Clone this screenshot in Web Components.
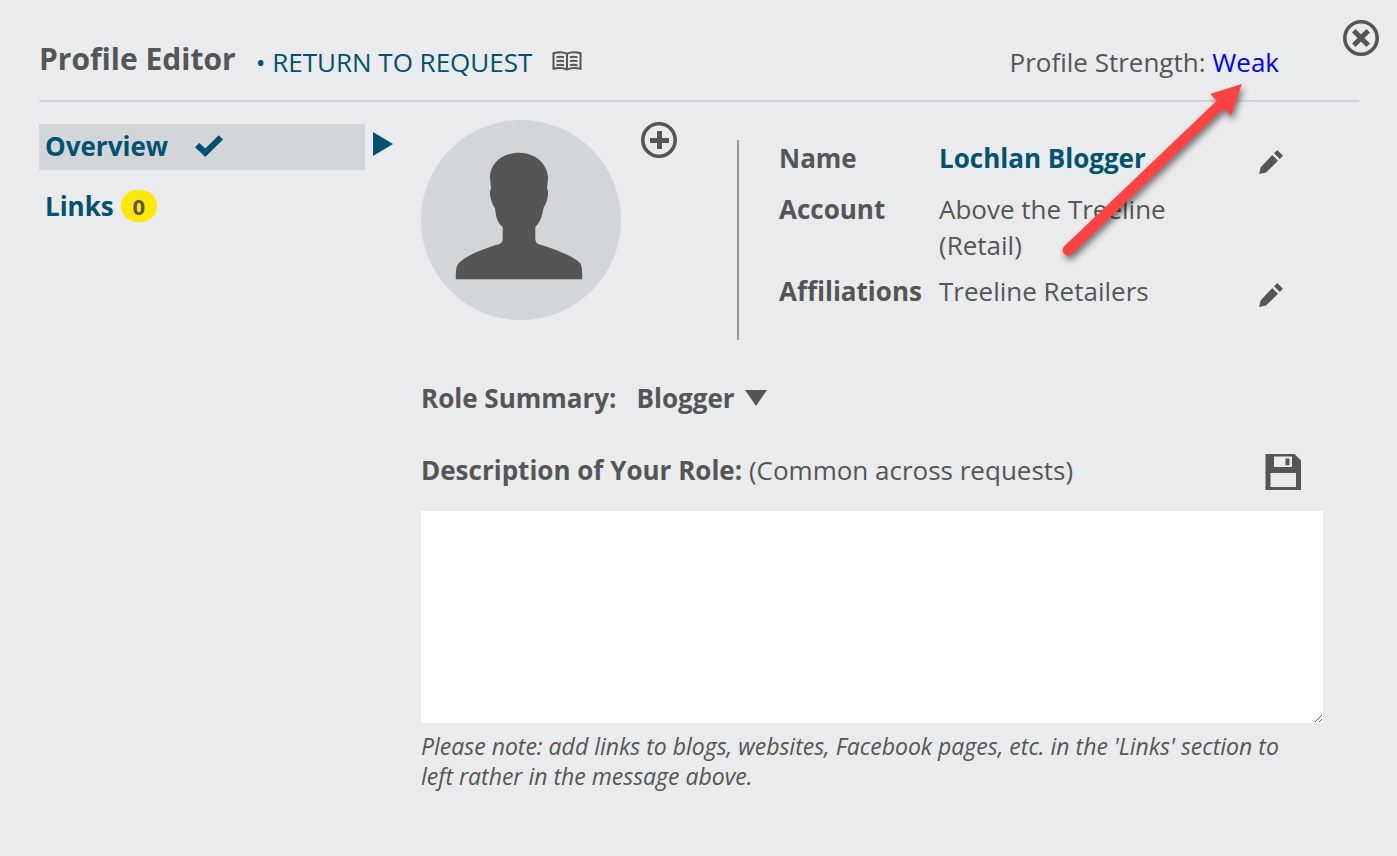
<!DOCTYPE html>
<html lang="en">
<head>
<meta charset="utf-8">
<meta name="viewport" content="width=device-width, initial-scale=1">
<title>Profile Editor</title>
<style>
  body {
    margin: 0;
    background-color: #e9ebec;
    color: #555;
    font: 26px/36px "Open Sans", sans-serif;
  }
</style>
</head>
<body>

<profile-editor>
  <editor-header slot="header">
    Profile Editor
    <a slot="return" href="#request">RETURN TO REQUEST</a>
    <a slot="strength" href="#strength">Weak</a>
  </editor-header>

  <section-link slot="nav" href="#overview" current>Overview</section-link>
  <section-link slot="nav" href="#links" count="0">Links</section-link>

  <profile-card>
    <profile-field label="Name" editable><a href="#name">Lochlan Blogger</a></profile-field>
    <profile-field label="Account">Above the Treeline (Retail)</profile-field>
    <profile-field label="Affiliations" editable>Treeline Retailers</profile-field>
  </profile-card>
  <role-form></role-form>

  <pointer-arrow slot="pointer"></pointer-arrow>
</profile-editor>

<script>
/*
 * Shared base: clones the element's template into an open root
 */
class BaseElement extends HTMLElement {
  constructor() {
    super();
    let t = document.createElement("template");
    t.innerHTML = this.template;
    this.attachShadow({ mode: "open" });
    this.shadowRoot.append(t.content.cloneNode(true));
  }
}

/*
 * Icons, drawn in the current text colour
 */
const ICONS = {
  close: `<svg viewBox="0 0 36 36" width="36" height="36" aria-hidden="true">
    <circle cx="18" cy="18" r="16.2" fill="none" stroke="currentColor" stroke-width="3.6"/>
    <path d="M10.800 10.800L25.200 25.200M25.200 10.800L10.800 25.200" stroke="currentColor" stroke-width="5"/>
  </svg>`,
  plus: `<svg viewBox="0 0 36 36" width="36" height="36" aria-hidden="true">
    <circle cx="18" cy="18" r="16.2" fill="none" stroke="currentColor" stroke-width="3.6"/>
    <path d="M18.500 9v18M9 18.500h19" stroke="currentColor" stroke-width="5"/>
  </svg>`,
  book: `<svg viewBox="0 0 30 20" width="30" height="20" aria-hidden="true">
    <path d="M1.500 2.200C6 .8 11 .8 15 2.600 19 .8 24 .8 28.500 2.200V17.800C24 16.600 19 16.700 15 18.500 11 16.700 6 16.600 1.500 17.800ZM15 2.600V19" fill="none" stroke="currentColor" stroke-width="2"/>
    <path d="M4.500 6.300q4-1 7.500 0M4.500 10.300q4-1 7.500 0M4.500 14.300q4-1 7.500 0M18 6.300q3.500-1 7.500 0M18 10.300q3.500-1 7.500 0M18 14.300q3.500-1 7.500 0" fill="none" stroke="currentColor" stroke-width="2"/>
  </svg>`,
  check: `<svg viewBox="0 0 28 22" width="28" height="22" aria-hidden="true">
    <path d="M0 12.300L4.300 8l6 5.600L23.700.2 28 4.500 10.300 22Z" fill="currentColor"/>
  </svg>`,
  pencil: `<svg viewBox="0 0 24 24" width="24" height="24" aria-hidden="true">
    <path d="M0 24L1.800 17.300 13.300 5 19 10.700 7 22.600ZM15 3.300L18.300 0 24 5.700 20.700 9Z" fill="currentColor"/>
  </svg>`,
  save: `<svg viewBox="0 0 36 36" width="36" height="36" aria-hidden="true">
    <path fill-rule="evenodd" d="M.5 0H29.500L36 6.500V36H.5ZM9 2.500V13H27V2.500ZM20.500 4.500H24.500V11.300H20.500ZM5.500 19V33H31V19Z" fill="currentColor"/>
  </svg>`,
  person: `<svg viewBox="0 0 200 200" width="200" height="200" aria-hidden="true">
    <path d="M98 32.700C80 32.700 68.500 45 69 58L70 68.300Q68.800 70 69 75C70 81 71.500 84.500 74 88.300 75 97 76 102 81.700 107.300V118.500Q81.700 122.800 78.300 124C62 129 43 136 37 144.300 34.700 148 35 152 34.700 158Q34.900 159.200 36 159.200H160.200Q161.300 159.200 161.300 158C161 152 161.300 147 159.500 143.500 153 136 133 129 117.300 124Q114.300 122.500 114.300 118.500V107.300C121 100 121 94 122.700 87.500 125.500 83 127 78 127 74Q127 70 126 68.300L127 58C127 45 115 32.700 98 32.700Z" fill="currentColor"/>
  </svg>`
};

/*
 * Page frame: header, section list and the open section
 */
class ProfileEditor extends BaseElement {
  get template() {
    return `
    <style>
      :host {
        display: block;
        position: relative;
        box-sizing: border-box;
        min-height: 100vh;
        padding: 38px 38px 60px 39px;
      }

      .body {
        display: grid;
        grid-template-columns: minmax(200px, 326px) minmax(0, 1fr);
        gap: 56px;
        padding-right: 36px;
      }

      nav {
        display: flex;
        flex-direction: column;
        gap: 14px;
        padding-top: 22px;
      }

      main {
        padding-top: 18px;
      }

      .close {
        position: absolute;
        top: 20px;
        right: 18px;
        display: block;
        padding: 0;
        border: 0;
        background: none;
        color: inherit;
        line-height: 0;
      }
    </style>

    <slot name="header"></slot>
    <button class="close" type="button" aria-label="Close">${ICONS.close}</button>
    <div class="body">
      <nav><slot name="nav"></slot></nav>
      <main><slot></slot></main>
    </div>
    <slot name="pointer"></slot>
    `;
  }
}

/*
 * Title, return link, guide and strength
 */
class EditorHeader extends BaseElement {
  get template() {
    return `
    <style>
      :host {
        display: flex;
        height: 62px;
        border-bottom: 2px solid #d2d5d7;
        line-height: 48px;
      }

      h1 {
        margin: 0 20px 0 0;
        font-size: 30px;
        line-height: 42px;
        font-weight: 700;
      }

      .return {
        color: #005270;
      }

      ::slotted(a) {
        color: #005270;
        text-decoration: none;
      }

      ::slotted(a[slot="strength"]) {
        color: #00f;
      }

      .guide {
        display: flex;
        align-items: center;
        height: 46px;
        margin: 0 auto 0 20px;
        padding: 0;
        border: 0;
        background: none;
        color: inherit;
      }

      .strength {
        margin-right: 80px;
      }
    </style>

    <h1><slot></slot></h1>
    <span class="return">• <slot name="return"></slot></span>
    <button class="guide" type="button" aria-label="Guide">${ICONS.book}</button>
    <span class="strength">Profile Strength: <slot name="strength"></slot></span>
    `;
  }
}

/*
 * One entry of the section list
 */
class SectionLink extends BaseElement {
  get template() {
    return `
    <style>
      :host {
        display: block;
        position: relative;
        color: #005270;
      }

      :host([current]) {
        background-color: #d2d6d9;
      }

      /* Marker beside the open section */
      :host([current])::after {
        content: "";
        position: absolute;
        left: calc(100% + 8px);
        top: 8px;
        border: 12px solid transparent;
        border-left: 20px solid #005270;
        border-right: 0;
      }

      a {
        display: flex;
        align-items: center;
        gap: 7px;
        padding: 4px 6px 6px;
        color: inherit;
        font-weight: 700;
        text-decoration: none;
      }

      .check {
        display: none;
        margin-left: 20px;
        line-height: 0;
      }

      :host([current]) .check {
        display: block;
      }

      .count {
        min-width: 36px;
        border-radius: 16px;
        background-color: #ffe900;
        color: #555;
        font-size: 22px;
        line-height: 32px;
        text-align: center;
      }

      .count:empty {
        display: none;
      }
    </style>

    <a><slot></slot><span class="check">${ICONS.check}</span><span class="count"></span></a>
    `;
  }

  connectedCallback() {
    let link = this.shadowRoot.querySelector("a");
    link.href = this.getAttribute("href");
    if (this.hasAttribute("current")) link.setAttribute("aria-current", "page");
    this.shadowRoot.querySelector(".count").textContent = this.getAttribute("count") || "";
  }
}

/*
 * Avatar and the account details
 */
class ProfileCard extends BaseElement {
  get template() {
    return `
    <style>
      :host {
        display: flex;
        align-items: flex-start;
      }

      .avatar {
        flex: none;
        border-radius: 50%;
        background-color: #d2d6d9;
        line-height: 0;
      }

      button {
        margin: 2px 60px 0 20px;
        padding: 0;
        border: 0;
        background: none;
        color: inherit;
        line-height: 0;
      }

      .details {
        display: flex;
        flex: 1;
        flex-direction: column;
        gap: 10px;
        box-sizing: border-box;
        min-height: 200px;
        margin-top: 20px;
        padding: 0 40px;
        border-left: 2px solid #999;
      }
    </style>

    <div class="avatar">${ICONS.person}</div>
    <button type="button" aria-label="Add photo">${ICONS.plus}</button>
    <div class="details"><slot></slot></div>
    `;
  }
}

/*
 * Label and value, with an edit button where allowed
 */
class ProfileField extends BaseElement {
  get template() {
    return `
    <style>
      :host {
        display: grid;
        grid-template-columns: 160px minmax(0, 1fr) 24px;
      }

      .label {
        font-weight: 700;
      }

      .value {
        padding-right: 60px;
      }

      ::slotted(a) {
        color: #005270;
        font-weight: 700;
        text-decoration: none;
      }

      button {
        display: none;
        align-items: center;
        height: 41px;
        padding: 3px 0 0;
        border: 0;
        background: none;
        color: inherit;
      }

      :host([editable]) button {
        display: flex;
      }
    </style>

    <span class="label"></span>
    <span class="value"><slot></slot></span>
    <button type="button">${ICONS.pencil}</button>
    `;
  }

  connectedCallback() {
    let label = this.getAttribute("label");
    this.shadowRoot.querySelector(".label").textContent = label;
    this.shadowRoot.querySelector("button").setAttribute("aria-label", "Edit " + label);
  }
}

/*
 * Role picker and description
 */
class RoleForm extends BaseElement {
  get template() {
    return `
    <style>
      :host {
        display: block;
        margin-top: 40px;
      }

      label {
        font-weight: 700;
      }

      .role {
        display: flex;
        align-items: center;
        gap: 20px;
      }

      .picker {
        display: flex;
        align-items: center;
      }

      .picker::after {
        content: "";
        margin-left: -22px;
        border: 11px solid transparent;
        border-top: 16px solid #555;
        border-bottom: 0;
        pointer-events: none;
      }

      select {
        appearance: none;
        margin: 0;
        padding: 0 31px 0 0;
        border: 0;
        background: none;
        color: inherit;
        font: inherit;
        font-weight: 700;
      }

      .description {
        display: flex;
        align-items: flex-start;
        justify-content: space-between;
        margin: 36px 0 20px;
        padding-right: 22px;
      }

      button {
        padding: 2px 0 1px;
        border: 0;
        background: none;
        color: inherit;
        line-height: 0;
      }

      textarea {
        display: block;
        box-sizing: border-box;
        width: 100%;
        height: 212px;
        padding: 10px;
        border: 0;
        background-color: #fff;
        color: inherit;
        font: inherit;
      }

      p {
        margin: 8px 0 0;
        padding-right: 20px;
        font-size: 23px;
        line-height: 30px;
        font-style: italic;
      }
    </style>

    <div class="role">
      <label for="role">Role Summary:</label>
      <span class="picker"><select id="role"><option>Blogger</option></select></span>
    </div>
    <div class="description">
      <span><label for="description">Description of Your Role:</label> (Common across requests)</span>
      <button type="button" aria-label="Save">${ICONS.save}</button>
    </div>
    <textarea id="description"></textarea>
    <p>Please note: add links to blogs, websites, Facebook pages, etc. in the 'Links' section to left rather in the message above.</p>
    `;
  }
}

/*
 * Red arrow that points at the profile strength
 */
class PointerArrow extends BaseElement {
  get template() {
    return `
    <style>
      :host {
        display: block;
        position: absolute;
        top: 80px;
        right: 147px;
        line-height: 0;
        pointer-events: none;
      }

      svg {
        filter: drop-shadow(2px 4px 3px rgba(0, 0, 0, .5));
        overflow: visible;
      }
    </style>

    <svg viewBox="0 0 190 180" width="190" height="180" aria-hidden="true">
      <path d="M181.800 4L150.200 14 156.700 20.700 4.200 166.200A5.500 5.500 0 0 0 12 174.200L163.500 28.600 171 35.700Z" fill="#ff4343"/>
    </svg>
    `;
  }
}

customElements.define("profile-editor", ProfileEditor);
customElements.define("editor-header", EditorHeader);
customElements.define("section-link", SectionLink);
customElements.define("profile-card", ProfileCard);
customElements.define("profile-field", ProfileField);
customElements.define("role-form", RoleForm);
customElements.define("pointer-arrow", PointerArrow);
</script>
</body>
</html>
